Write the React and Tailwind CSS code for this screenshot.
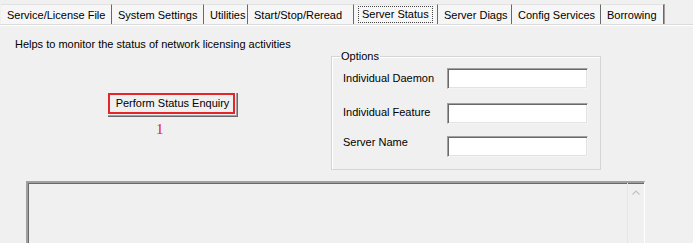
import { useState } from "react";

const tabs = [
  { label: "Service/License File", w: "w-[111px]" },
  { label: "System Settings", w: "w-[92px]" },
  { label: "Utilities", w: "w-[44px]" },
  { label: "Start/Stop/Reread", w: "w-[106px]" },
  { label: "Server Status", w: "w-[84px]", active: true },
  { label: "Server Diags", w: "w-[74px]" },
  { label: "Config Services", w: "w-[89px]" },
  { label: "Borrowing", w: "w-[63px]" },
];

const fieldClass =
  "w-[141px] h-[21px] bg-white border border-t-[#a0a0a0] border-l-[#a0a0a0] border-r-[#f4f4f4] border-b-[#f4f4f4] shadow-[inset_1px_1px_0_#696969,inset_-1px_-1px_0_#e3e3e3] outline-none px-1 text-[11px]";

const App = () => {
  const [daemon, setDaemon] = useState("");
  const [feature, setFeature] = useState("");
  const [server, setServer] = useState("");

  return (
    <div
      className="w-[693px] h-[243px] overflow-hidden bg-[#f0f0f0] text-black text-[11px] leading-[13px]"
      style={{ fontFamily: '"Liberation Sans", Arial, sans-serif' }}
    >
      {/* Tab strip */}
      <div className="h-[25px] flex items-end border-b border-[#dadada] shadow-[0_1px_0_#ffffff]">
        <div className="w-[1px]" />
        {tabs.map((t) => (
          <div
            key={t.label}
            className={`${t.w} h-[20px] flex items-center pl-[6px] bg-[#f6f6f6] border-t border-[#e2e2e2] border-r border-r-[#696969] shadow-[1px_0_0_#a0a0a0] whitespace-nowrap`}
          >
            {t.active ? (
              <span className="border border-dotted border-[#444] px-[3px] py-[1px] -ml-[2px]">
                {t.label}
              </span>
            ) : (
              <span className="pt-[1px]">{t.label}</span>
            )}
          </div>
        ))}
      </div>

      <div className="flex">
        {/* Left column */}
        <div className="w-[331px] pl-[15px] pt-[13px] flex flex-col items-start">
          <p>Helps to monitor the status of network licensing activities</p>

          <button className="relative mt-[42px] ml-[93px] w-[130px] h-[24px] bg-[#f0f0f0] border-r border-b border-[#696969] shadow-[inset_-1px_-1px_0_#a0a0a0] flex items-center justify-center pb-[2px]">
            Perform Status Enquiry
            <span className="absolute left-0 top-0 right-[2px] bottom-[2px] border-2 border-[#e4262b]" />
          </button>

          <span
            className="mt-[4px] ml-[141px] text-[15px] leading-[16px] text-[#e3231f]"
            style={{ fontFamily: '"Liberation Serif", "Times New Roman", serif' }}
          >
            1
          </span>
        </div>

        {/* Options group */}
        <fieldset className="mt-[25px] w-[270px] border border-[#d5d5d5] shadow-[inset_1px_1px_0_#ffffff] pl-[11px] pb-[12px]">
          <legend className="-ml-[3px] px-[1px]">Options</legend>

          <div className="flex items-start mt-[5px]">
            <label className="w-[104px] pt-[4px]">Individual Daemon</label>
            <input className={fieldClass} value={daemon} onChange={(e) => setDaemon(e.target.value)} />
          </div>
          <div className="flex items-start mt-[14px]">
            <label className="w-[104px] pt-[3px]">Individual Feature</label>
            <input className={fieldClass} value={feature} onChange={(e) => setFeature(e.target.value)} />
          </div>
          <div className="flex items-start mt-[12px]">
            <label className="w-[104px]">Server Name</label>
            <input className={fieldClass} value={server} onChange={(e) => setServer(e.target.value)} />
          </div>
        </fieldset>
      </div>

      {/* Output area */}
      <div className="mt-[11px] ml-[26px] w-[619px] h-[90px] flex border-t-2 border-l-2 border-t-[#a0a0a0] border-l-[#a0a0a0] shadow-[inset_1px_1px_0_#696969] border-r border-r-[#ffffff]">
        <div className="flex-1" />
        <div className="w-[17px] border-l border-[#e6e6e6] flex justify-center pt-[7px]">
          <svg width="8" height="5" viewBox="0 0 8 5">
            <polyline points="0.5,4.5 4,1 7.5,4.5" fill="none" stroke="#c2c2c2" strokeWidth="1.2" />
          </svg>
        </div>
      </div>
    </div>
  );
};

export default App;
